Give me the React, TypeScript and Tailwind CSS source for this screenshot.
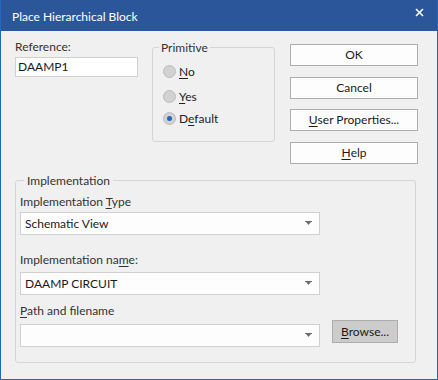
import React from 'react';

const font = { fontFamily: 'Lato, "Liberation Sans", Arial, sans-serif' };

function Arrow() {
  return (
    <svg width="7" height="5" viewBox="0 0 7 5" className="shrink-0">
      <rect x="0" y="0" width="7" height="1" fill="#6d6d6d" />
      <path d="M1 1 L6 1 L3.5 4 Z" fill="#6d6d6d" />
    </svg>
  );
}

function Combo({ value }: { value?: string }) {
  return (
    <div className="flex h-[23px] w-[300px] items-center border border-[#d0d0d0] bg-[#fdfdfd] pl-[4px] pr-[7px] text-[12px] text-[#1a1a1a]">
      <span className="flex-1">{value}</span>
      <Arrow />
    </div>
  );
}

function Radio({ label, ul, checked, className }: { label: string; ul: number; checked?: boolean; className?: string }) {
  return (
    <div className={`flex h-[15px] items-center gap-[3px] text-[12px] text-[#222] ${className ?? ''}`}>
      <span className="flex h-[13px] w-[13px] items-center justify-center rounded-full border border-[#bcbcbc] bg-[#d2d2d2]">
        {checked && <span className="h-[5px] w-[5px] rounded-full bg-[#1e66c4]" />}
      </span>
      <span>
        {label.slice(0, ul)}
        <span className="underline underline-offset-2">{label[ul]}</span>
        {label.slice(ul + 1)}
      </span>
    </div>
  );
}

function Btn({ children, className }: { children: React.ReactNode; className?: string }) {
  return (
    <div className={`flex h-[22px] w-[128px] items-center justify-center border border-[#adadad] bg-[#fdfdfd] text-[12px] text-[#1a1a1a] ${className ?? ''}`}>
      {children}
    </div>
  );
}

export default function App() {
  return (
    <div style={font} className="flex h-[380px] w-[438px] flex-col border border-t-0 border-[#1f68c0] bg-[#f0f0f0]">
      {/* Title bar */}
      <div className="flex h-[31px] items-center justify-between bg-[#2b579a] pl-[11px] pr-[13px] text-white">
        <span className="pt-[3px] text-[12px]">Place Hierarchical Block</span>
        <svg width="9" height="9" viewBox="0 0 9 9" className="-mt-[7px]">
          <path d="M1 1 L8 8 M8 1 L1 8" stroke="white" strokeWidth="1.6" />
        </svg>
      </div>

      {/* Top row */}
      <div className="flex items-start pl-[14px]">
        <div className="mt-[8px] flex w-[123px] flex-col">
          <span className="h-[15px] text-[12px] leading-[15px] text-[#333]">Reference:</span>
          <div className="mt-[3px] flex h-[20px] items-center border border-[#d0d0d0] bg-white pl-[2px] text-[12px] text-[#1a1a1a]">
            DAAMP1
          </div>
        </div>

        <fieldset className="ml-[14px] mt-[9px] h-[102px] w-[123px] rounded-[3px] border border-[#d5d5d5] pl-[10px]">
          <legend className="ml-[-4px] px-[2px] text-[12px] leading-[15px] text-[#333]">Primitive</legend>
          <Radio label="No" ul={0} className="mt-[9px]" />
          <Radio label="Yes" ul={0} className="mt-[10px]" />
          <Radio label="Default" ul={1} checked className="mt-[7px]" />
        </fieldset>

        <div className="ml-[15px] mt-[13px] flex flex-col">
          <Btn>OK</Btn>
          <Btn className="mt-[11px]">Cancel</Btn>
          <Btn className="mt-[10px]">
            <span className="underline underline-offset-2">U</span>ser Properties...
          </Btn>
          <Btn className="mt-[11px]">
            <span className="underline underline-offset-2">H</span>elp
          </Btn>
        </div>
      </div>

      {/* Implementation group */}
      <fieldset className="ml-[14px] mt-[9px] h-[190px] w-[401px] rounded-[3px] border border-[#d5d5d5] pl-[4px]">
        <legend className="ml-[4px] px-[3px] text-[12px] leading-[15px] text-[#333]">Implementation</legend>
        <div className="mt-[6px] h-[15px] text-[12px] leading-[15px] text-[#333]">
          Implementation <span className="underline underline-offset-2">T</span>ype
        </div>
        <div className="mt-[3px]">
          <Combo value="Schematic View" />
        </div>
        <div className="mt-[17px] h-[15px] text-[12px] leading-[15px] text-[#333]">
          Implementation na<span className="underline underline-offset-2">m</span>e:
        </div>
        <div className="mt-[5px]">
          <Combo value="DAAMP CIRCUIT" />
        </div>
        <div className="mt-[8px] h-[15px] text-[12px] leading-[15px] text-[#333]">
          <span className="underline underline-offset-2">P</span>ath and filename
        </div>
        <div className="mt-[2px] flex items-end">
          <Combo />
          <div className="mb-[4px] ml-[12px] flex h-[23px] w-[66px] items-center justify-center border border-[#adadad] bg-[#cccccc] text-[12px] text-[#1a1a1a]">
            <span className="underline underline-offset-2">B</span>rowse...
          </div>
        </div>
      </fieldset>
    </div>
  );
}
